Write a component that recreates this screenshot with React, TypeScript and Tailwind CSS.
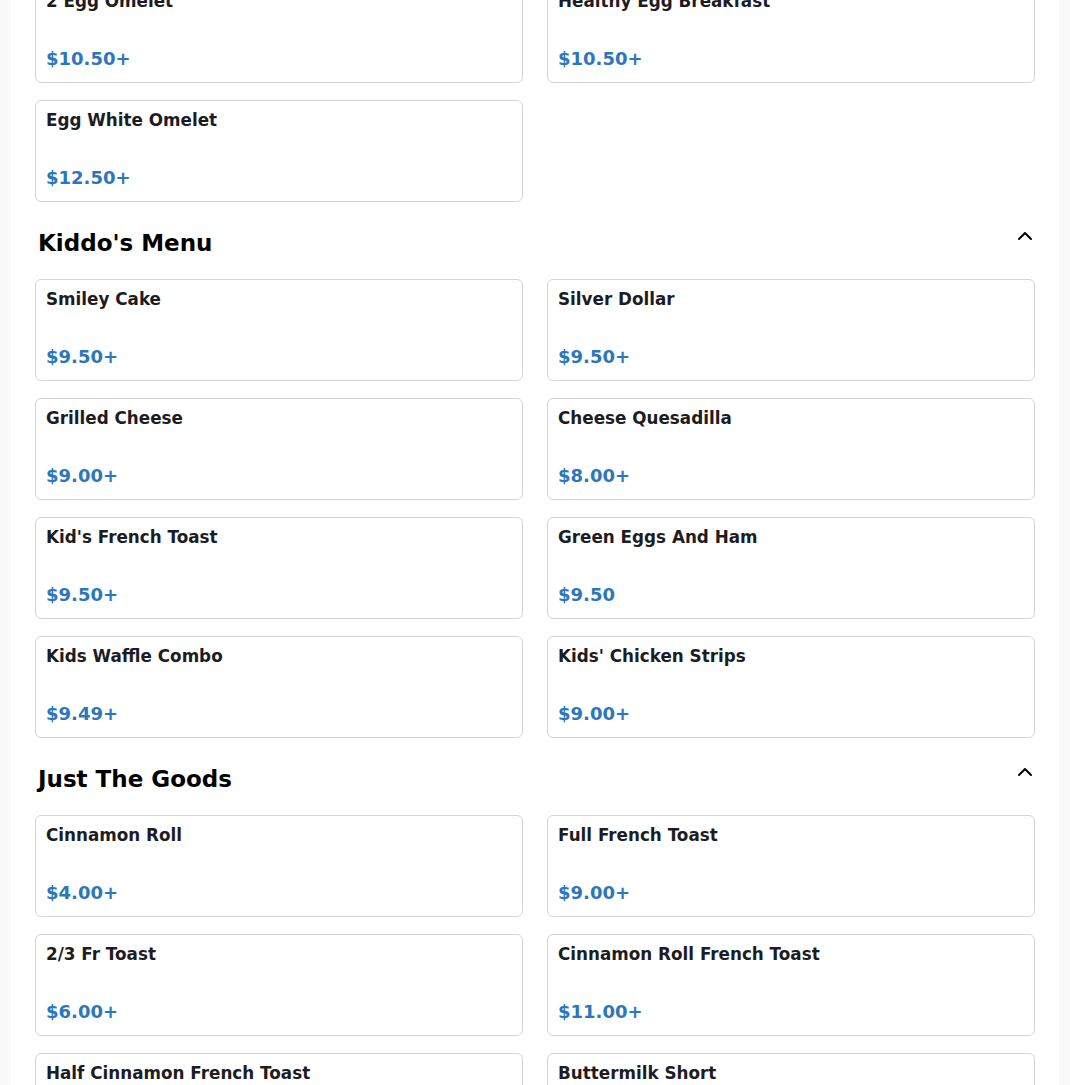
import { ChevronUp } from 'lucide-react';

type Item = { name: string; price: string };

const sections: { title: string | null; items: Item[] }[] = [
  {
    title: null,
    items: [
      { name: '2 Egg Omelet', price: '$10.50+' },
      { name: 'Healthy Egg Breakfast', price: '$10.50+' },
      { name: 'Egg White Omelet', price: '$12.50+' },
    ],
  },
  {
    title: "Kiddo's Menu",
    items: [
      { name: 'Smiley Cake', price: '$9.50+' },
      { name: 'Silver Dollar', price: '$9.50+' },
      { name: 'Grilled Cheese', price: '$9.00+' },
      { name: 'Cheese Quesadilla', price: '$8.00+' },
      { name: "Kid's French Toast", price: '$9.50+' },
      { name: 'Green Eggs And Ham', price: '$9.50' },
      { name: 'Kids Waffle Combo', price: '$9.49+' },
      { name: "Kids' Chicken Strips", price: '$9.00+' },
    ],
  },
  {
    title: 'Just The Goods',
    items: [
      { name: 'Cinnamon Roll', price: '$4.00+' },
      { name: 'Full French Toast', price: '$9.00+' },
      { name: '2/3 Fr Toast', price: '$6.00+' },
      { name: 'Cinnamon Roll French Toast', price: '$11.00+' },
      { name: 'Half Cinnamon French Toast', price: '$8.00+' },
      { name: 'Buttermilk Short', price: '$8.50+' },
    ],
  },
];

const MenuCard = ({ item }: { item: Item }) => (
  <div className="h-[102px] bg-white border border-[#d4d4d4] rounded-[6px] flex flex-col justify-between pt-[7px] pb-[9px] px-[10px]">
    <div className="text-[16.8px] leading-[24px] font-bold text-[#1c1c22]">{item.name}</div>
    <div className="text-[18px] leading-[28px] font-bold text-[#2b76bd]">{item.price}</div>
  </div>
);

const App = () => {
  return (
    <div
      className="min-h-screen bg-[#f9f9f9] px-[11px] overflow-hidden"
      style={{ fontFamily: '"DejaVu Sans", sans-serif' }}
    >
      <div className="bg-white px-6 -mt-[19px] pb-10">
        {sections.map((section, i) => (
          <div key={i}>
            {section.title && (
              <div className="mt-[21px] mb-[16px] h-[40px] flex justify-between items-start">
                <h2 className="pl-[3px] text-[23px] leading-[40px] font-bold text-black">
                  {section.title}
                </h2>
                <ChevronUp size={24} strokeWidth={2} className="mt-[1px] -mr-[2px] text-black" />
              </div>
            )}
            <div className="grid grid-cols-2 gap-x-6 gap-y-[17px]">
              {section.items.map((item) => (
                <MenuCard key={item.name} item={item} />
              ))}
            </div>
          </div>
        ))}
      </div>
    </div>
  );
};

export default App;
